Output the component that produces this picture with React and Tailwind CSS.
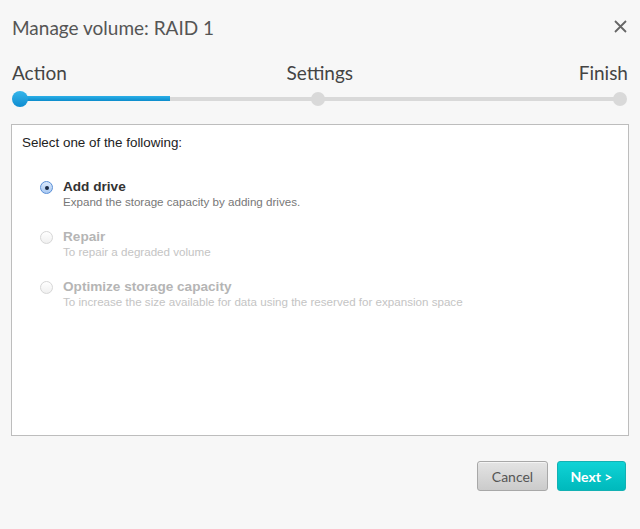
import React, { useState } from "react";

const options = [
  {
    id: "add",
    title: "Add drive",
    desc: "Expand the storage capacity by adding drives.",
    enabled: true,
  },
  {
    id: "repair",
    title: "Repair",
    desc: "To repair a degraded volume",
    enabled: false,
  },
  {
    id: "optimize",
    title: "Optimize storage capacity",
    desc: "To increase the size available for data using the reserved for expansion space",
    enabled: false,
  },
];

function Radio({ checked, enabled }) {
  return (
    <span
      className={
        "mt-[2px] flex h-[13px] w-[13px] shrink-0 items-center justify-center rounded-full border " +
        (checked
          ? "border-[#5a8fd6] bg-gradient-to-b from-[#dbe9fb] to-[#a9c9f2]"
          : enabled
          ? "border-[#999] bg-white"
          : "border-[#d6d6d6] bg-gradient-to-b from-white to-[#f0f0f0]")
      }
    >
      {checked && <span className="h-[4px] w-[4px] rounded-full bg-[#1a2a44]" />}
    </span>
  );
}

function Stepper() {
  return (
    <div className="px-[12px] pt-[20px]">
      <div className="flex items-center justify-between text-[19px] leading-[24px] text-[#444] [font-family:Lato,sans-serif]">
        <span>Action</span>
        <span className="mr-[6px]">Settings</span>
        <span>Finish</span>
      </div>
      <div className="relative mx-[8px] mt-[6px] h-[16px]">
        <div className="absolute left-0 right-0 top-[6px] h-[4px] bg-[#d9d9d9]" />
        <div className="absolute left-0 top-[5px] h-[5px] w-[150px] bg-gradient-to-b from-[#2ab0e8] to-[#0b8ccc]" />
        <div className="absolute left-[-8px] top-0 h-[16px] w-[16px] rounded-full bg-gradient-to-b from-[#35b6ea] to-[#0c8cd0]" />
        <div className="absolute left-[291px] top-[1px] h-[14px] w-[14px] rounded-full bg-[#d9d9d9]" />
        <div className="absolute right-[-7px] top-[1px] h-[14px] w-[14px] rounded-full bg-[#d9d9d9]" />
      </div>
    </div>
  );
}

export default function App() {
  const [selected] = useState("add");

  return (
    <div className="flex h-[529px] w-[640px] flex-col bg-[#f7f7f7]">
      <div className="flex items-center justify-between pl-[12px] pr-[13px] pt-[15px]">
        <h1 className="text-[19px] leading-[26px] text-[#555] [font-family:Lato,sans-serif]">
          Manage volume: RAID 1
        </h1>
        <svg width="13" height="13" viewBox="0 0 13 13" className="mt-[-3px]">
          <path d="M1 1 L12 12 M12 1 L1 12" stroke="#666" strokeWidth="1.8" />
        </svg>
      </div>

      <Stepper />

      <div className="mx-[11px] mt-[17px] h-[312px] border border-[#bdbdbd] bg-white px-[10px] pt-[10px] [font-family:'Liberation_Sans',Arial,sans-serif]">
        <p className="text-[13.4px] leading-[16px] text-[#222]">Select one of the following:</p>
        <div className="mt-[28px] flex flex-col gap-[20px] pl-[18px]">
          {options.map((o) => (
            <div key={o.id} className="flex gap-[10px]">
              <Radio checked={selected === o.id} enabled={o.enabled} />
              <div>
                <div
                  className={
                    "text-[13.6px] font-bold leading-[16px] " +
                    (o.enabled ? "text-[#333]" : "text-[#b5b5b5]")
                  }
                >
                  {o.title}
                </div>
                <div
                  className={
                    "text-[11.6px] leading-[14px] " +
                    (o.enabled ? "text-[#777]" : "text-[#c4c4c4]")
                  }
                >
                  {o.desc}
                </div>
              </div>
            </div>
          ))}
        </div>
      </div>

      <div className="mt-[25px] flex justify-end gap-[9px] pr-[14px] [font-family:Lato,sans-serif]">
        <button className="h-[30px] w-[71px] rounded-[3px] border border-[#a8a8a8] bg-gradient-to-b from-[#e4e4e4] to-[#cbcbcb] text-[14px] text-[#555] shadow-[inset_0_1px_0_#f4f4f4]">
          Cancel
        </button>
        <button className="h-[30px] w-[69px] rounded-[3px] border border-[#12b1b3] bg-gradient-to-b from-[#0fd3d6] to-[#00b9bc] text-[14px] font-bold text-white">
          Next &gt;
        </button>
      </div>
    </div>
  );
}
